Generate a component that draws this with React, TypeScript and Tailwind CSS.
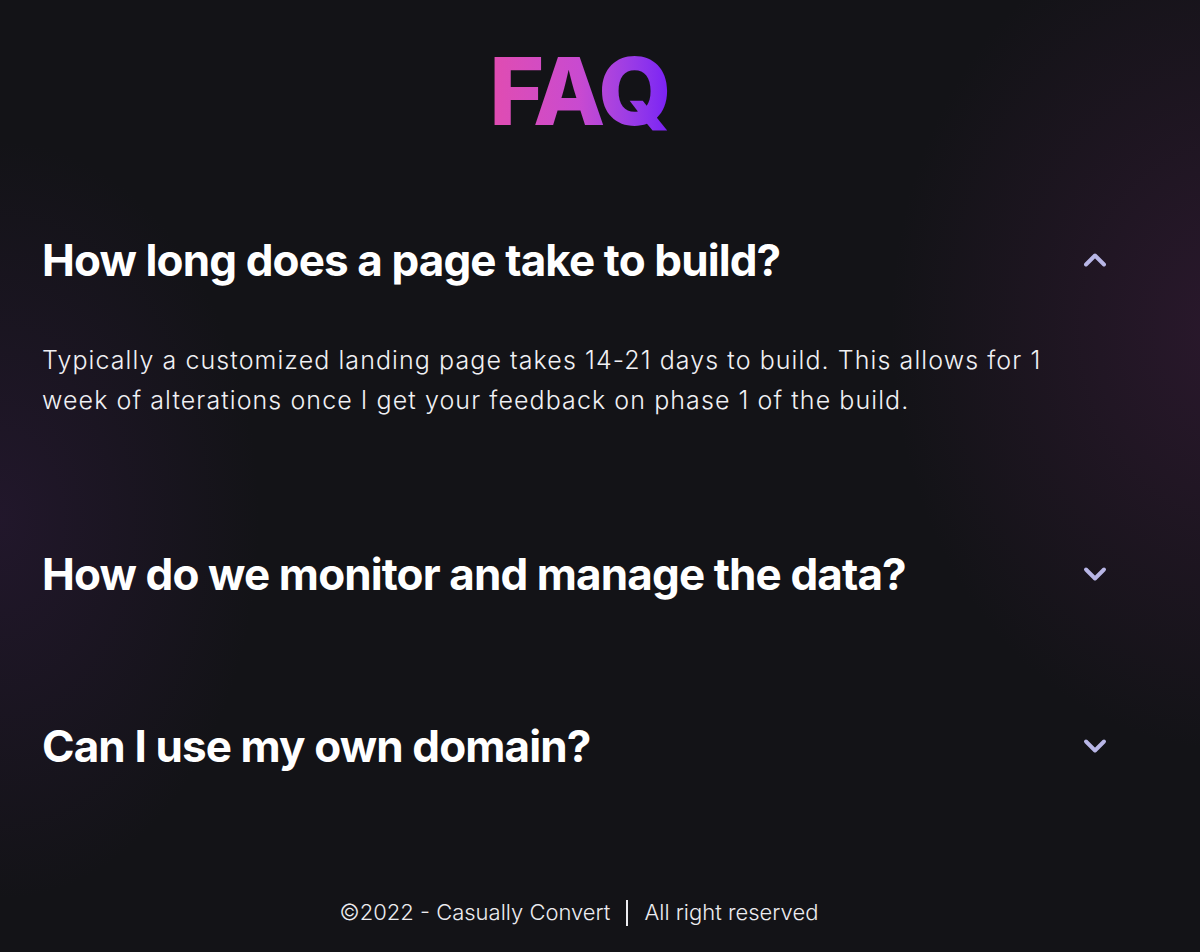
import React from "react";

const faqs = [
  {
    q: "How long does a page take to build?",
    a: "Typically a customized landing page takes 14-21 days to build. This allows for 1 week of alterations once I get your feedback on phase 1 of the build.",
    open: true,
  },
  { q: "How do we monitor and manage the data?", a: "", open: false },
  { q: "Can I use my own domain?", a: "", open: false },
];

function Chevron({ up }: { up: boolean }) {
  return (
    <svg
      width="36"
      height="36"
      viewBox="0 0 24 24"
      fill="none"
      stroke="#b8b6e6"
      strokeWidth="2.6"
      strokeLinecap="round"
      strokeLinejoin="round"
    >
      {up ? <path d="M6 15l6-6 6 6" /> : <path d="M6 9l6 6 6-6" />}
    </svg>
  );
}

export default function App() {
  return (
    <div
      className="min-h-[952px] w-full bg-[#131317] text-white flex flex-col bg-[radial-gradient(ellipse_260px_380px_at_0px_520px,rgba(60,30,80,0.35),transparent),radial-gradient(ellipse_340px_420px_at_1230px_330px,rgba(70,30,70,0.45),transparent)]"
      style={{ fontFamily: "Inter, 'Noto Sans', sans-serif" }}
    >
      <h1 className="pt-[36px] pr-[42px] text-center text-[94px] font-extrabold leading-[110px] tracking-[-0.03em]">
        <span className="bg-gradient-to-r from-[#e14cb0] via-[#c94ad0] to-[#7a1ff5] bg-clip-text text-transparent">
          FAQ
        </span>
      </h1>

      <div className="mt-[87px] pl-[42px] pr-[87px] flex flex-col">
        {faqs.map((f, i) => (
          <div key={i} className={i === 0 ? "" : i === 1 ? "mt-[127px]" : "mt-[118px]"}>
            <div className="flex items-center justify-between">
              <h2 className="text-[44px] font-bold leading-[54px] tracking-[-0.02em]">{f.q}</h2>
              <Chevron up={f.open} />
            </div>
            {f.open && (
              <p className="mt-[53px] text-[25px] font-light leading-[40px] tracking-[1.08px] text-[#f0f0f4] max-w-[1030px]">
                {f.a}
              </p>
            )}
          </div>
        ))}
      </div>

      <footer className="mt-[123px] pr-[42px] flex items-center justify-center text-[22px] text-[#ececf0] font-light">
        <span>©2022 - Casually Convert</span>
        <span className="mx-[16px] h-[26px] w-[2px] bg-[#ececf0]" />
        <span>All right reserved</span>
      </footer>
    </div>
  );
}
